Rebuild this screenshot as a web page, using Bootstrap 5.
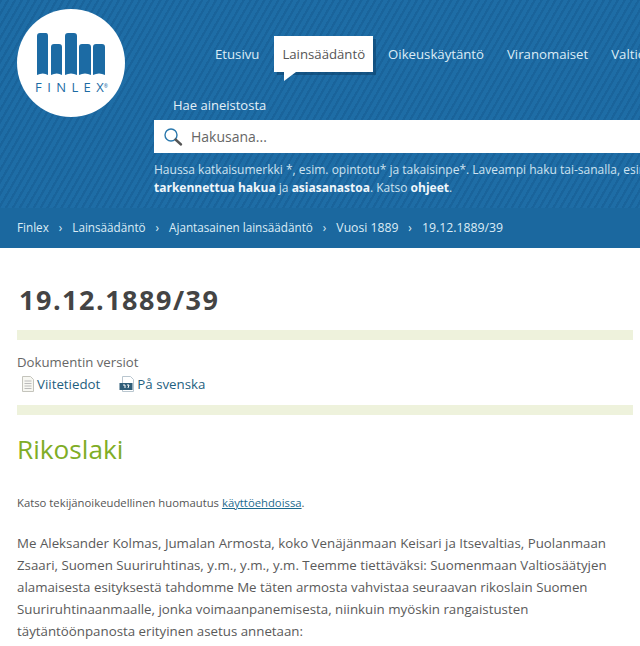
<!DOCTYPE html>
<html lang="fi">
<head>
<meta charset="utf-8">
<title>Rikoslaki</title>
<link href="https://cdn.jsdelivr.net/npm/bootstrap@5.3.0/dist/css/bootstrap.min.css" rel="stylesheet">
<style>
html,body{overflow:hidden;height:646px}
body{font-family:"Open Sans","Noto Sans",sans-serif;color:#555;background:#fff;font-size:14px}
.fx-head{height:208px;background-color:#1e6da6;background-image:repeating-linear-gradient(120deg,rgba(12,70,120,.24) 0,rgba(12,70,120,.24) 2px,transparent 2.5px,transparent 6px);overflow:hidden}
.fx-logo{flex:0 0 154px;padding:9px 0 0 17px}
.fx-circle{width:108px;height:108px;border-radius:50%;background:#fff;display:flex;flex-direction:column;align-items:center;padding-top:24px}
.fx-word{font-size:13px;letter-spacing:5.4px;color:#1c6ba4;line-height:1;margin-top:5px;margin-left:1px;white-space:nowrap}
.fx-word span{letter-spacing:0}
.fx-word sup{font-size:5px;letter-spacing:0;top:-.9em}
.fx-right{flex:0 0 600px;min-width:0}
.fx-nav{padding-top:36px;height:91px;flex-wrap:nowrap;white-space:nowrap}
.fx-nav a{color:#dcecf6;text-decoration:none;font-size:13.2px;line-height:36px;height:36px;padding:0 11.5px;display:block;position:relative}
.fx-nav .fx-i1{margin-left:49.5px}
.fx-nav a.fx-on{background:#fff;color:#555;padding:0 8px;margin:0 3.5px;box-shadow:3px 3px 0 rgba(10,60,100,.5)}
.fx-nav a.fx-on::after{content:"";position:absolute;left:10px;top:36px;border-style:solid;border-width:9px 12px 0 0;border-color:#fff transparent transparent transparent}
.fx-label{color:#e4f0f8;font-size:13px;line-height:18px;padding-left:19px;height:29px;padding-top:5px}
.fx-search{background:#fff;height:33px;display:flex;align-items:center;padding-left:9px;gap:8px;color:#666;font-size:14px}
.fx-help{font-size:12px;line-height:18px;color:#cfe3f0;white-space:nowrap;padding-top:8px}
.fx-help b{color:#f0f7fb;font-weight:700}
.fx-crumb{height:40px;background:#1b689f;color:#dcecf6;font-size:11.7px;padding:0 17px;gap:10px;white-space:nowrap}
.fx-crumb b{font-weight:500}
.fx-crumb .fx-last{font-size:12.3px}
.fx-crumb b.fx-last{font-size:12.2px}
.fx-main{padding:0 7px 0 17px}
.fx-num{font-size:27px;font-weight:700;color:#444;letter-spacing:1.5px;line-height:34px;margin:35px 0 0 2px}
.fx-bar{height:10px;background:#eef2dc}
.fx-bar.fx-b1{margin-top:13px}
.fx-vers{font-size:13.2px;line-height:18px;margin-top:13px;color:#666}
.fx-links{font-size:13.3px;line-height:20px;margin:3px 0 11px 4px;gap:19px}
.fx-links a{color:#1f5f80;text-decoration:none;display:flex;align-items:center;gap:2px}
.fx-title{font-size:26.2px;font-weight:400;color:#80ad26;line-height:36px;margin:16px 0 0}
.fx-note{font-size:11.3px;line-height:16px;margin:28px 0 0;color:#555}
.fx-note a{color:#1c6a8e}
.fx-body{font-size:13.3px;line-height:22px;margin:21px 0 0;color:#5a5a5a}
</style>
</head>
<body>
<header class="fx-head d-flex">
  <div class="fx-logo">
    <div class="fx-circle">
      <svg width="70" height="43" viewBox="0 0 70 43" fill="#1c6ba4" aria-hidden="true">
        <path d="M1 3q0-3 3-3h6q2 0 2 3v39q-5-3-11 0z"/>
        <path d="M15 14q0-3 3-3h5q3 0 3 3v28q-5-3-11 0z"/>
        <path d="M29 3q0-3 3-3h6q3 0 3 3v39q-6-3-12 0z"/>
        <path d="M43 14q0-3 3-3h6q3 0 3 3v28q-6-3-12 0z"/>
        <path d="M57 14q0-3 3-3h6q3 0 3 3v28q-6-3-12 0z"/>
      </svg>
      <div class="fx-word">FINLE<span>X</span><sup>®</sup></div>
    </div>
  </div>
  <div class="fx-right">
    <nav class="fx-nav d-flex align-items-start">
      <a class="fx-i1" href="#">Etusivu</a>
      <a class="fx-on" href="#">Lainsäädäntö</a>
      <a href="#">Oikeuskäytäntö</a>
      <a href="#">Viranomaiset</a>
      <a href="#">Valtiosopimukset</a>
    </nav>
    <div class="fx-label">Hae aineistosta</div>
    <div class="fx-search">
      <svg width="20" height="20" viewBox="0 0 20 20" fill="none" aria-hidden="true">
        <circle cx="8" cy="8" r="6" stroke="#2a78ad" stroke-width="1.4"/>
        <path d="M12.5 12.5l5.5 5" stroke="#555" stroke-width="2.4" stroke-linecap="round"/>
      </svg>
      <span>Hakusana...</span>
    </div>
    <div class="fx-help">Haussa katkaisumerkki *, esim. opintotu* ja takaisinpe*. Laveampi haku tai-sanalla, esim. laki tai asetus.<br><b>tarkennettua hakua</b> ja <b>asiasanastoa</b>. Katso <b>ohjeet</b>.</div>
  </div>
</header>
<div class="fx-crumb d-flex align-items-center">
  <b>Finlex</b><span>›</span><b>Lainsäädäntö</b><span>›</span><b>Ajantasainen lainsäädäntö</b><span>›</span><b class="fx-last">Vuosi 1889</b><span>›</span><span class="fx-last">19.12.1889/39</span>
</div>
<main class="fx-main">
  <div class="fx-num">19.12.1889/39</div>
  <div class="fx-bar fx-b1"></div>
  <div class="fx-vers">Dokumentin versiot</div>
  <div class="fx-links d-flex">
    <a href="#"><svg width="14" height="16" viewBox="0 0 14 16" aria-hidden="true"><path d="M1.5.5h8l3 3v12h-11z" fill="#f7f7f2" stroke="#c4c4bc"/><path d="M3.5 5h7M3.5 7.5h7M3.5 10h7M3.5 12.5h7" stroke="#bbb"/></svg>Viitetiedot</a>
    <a href="#"><svg width="16" height="16" viewBox="0 0 16 16" aria-hidden="true"><path d="M3.5.5h8l3 3v12h-11z" fill="#fff" stroke="#b9c6cf"/><rect x="0.5" y="7" width="13" height="7" fill="#2f5d78"/><path d="M4 9h2v3M8 9h2l-1 3" stroke="#fff" fill="none"/></svg>På svenska</a>
  </div>
  <div class="fx-bar"></div>
  <h1 class="fx-title">Rikoslaki</h1>
  <p class="fx-note">Katso tekijänoikeudellinen huomautus <a href="#">käyttöehdoissa</a>.</p>
  <p class="fx-body">Me Aleksander Kolmas, Jumalan Armosta, koko Venäjänmaan Keisari ja Itsevaltias, Puolanmaan Zsaari, Suomen Suuriruhtinas, y.m., y.m., y.m. Teemme tiettäväksi: Suomenmaan Valtiosäätyjen alamaisesta esityksestä tahdomme Me täten armosta vahvistaa seuraavan rikoslain Suomen Suuriruhtinaanmaalle, jonka voimaanpanemisesta, niinkuin myöskin rangaistusten täytäntöönpanosta erityinen asetus annetaan:</p>
</main>
<script src="https://cdn.jsdelivr.net/npm/bootstrap@5.3.0/dist/js/bootstrap.bundle.min.js"></script>
</body>
</html>
